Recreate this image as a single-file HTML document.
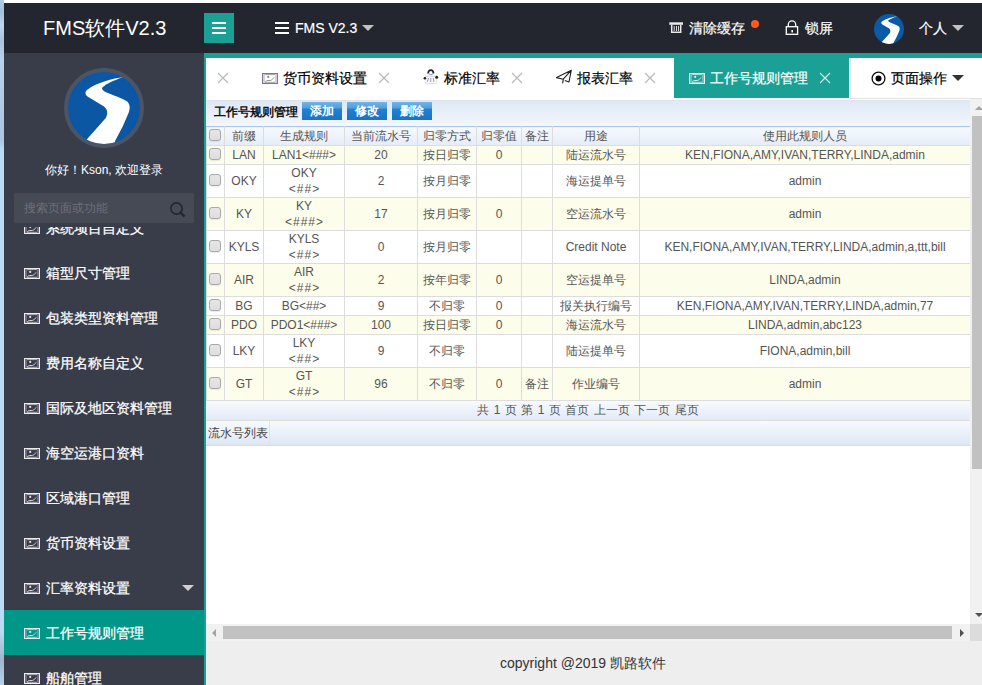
<!DOCTYPE html>
<html><head><meta charset="utf-8">
<style>
*{margin:0;padding:0;box-sizing:border-box;}
html,body{width:982px;height:685px;overflow:hidden;background:#fff;font-family:"Liberation Sans",sans-serif;position:relative;}
.abs{position:absolute;}
#lstrip{left:0;top:0;width:4px;height:685px;background:linear-gradient(#b0cae4 0,#a6c0da 12px,#bcd6f0 25px,#a9c3dd 40px,#b8d2ec 60px,#abc6e0 140px,#bcdaf6 150px,#bcdaf6 630px,#9fb6cc 660px,#b8d2ea 685px);}
#header{left:4px;top:3px;width:978px;height:50px;background:#23262e;color:#fff;}
#logo{left:39px;top:0;height:50px;line-height:50px;font-size:20px;color:#fff;white-space:nowrap;}
#hamb{left:200px;top:10px;width:30px;height:30px;background:#1aa094;}
#hamb i{position:absolute;left:8px;width:14px;height:2px;background:#fff;}
.hbar{position:absolute;width:14px;height:2px;background:#fff;}
.htxt{position:absolute;top:0;height:50px;line-height:50px;font-size:14px;color:#fff;white-space:nowrap;-webkit-text-stroke:0.2px #fff;}
.caret{position:absolute;width:0;height:0;border-left:6px solid transparent;border-right:6px solid transparent;border-top:6px solid #c2c2c2;}
#side{left:4px;top:53px;width:200px;height:632px;background:#393d49;overflow:hidden;}
#menu{left:0;top:174px;width:200px;height:458px;overflow:hidden;}
.mi{position:absolute;left:0;width:200px;height:45px;}
.mi .ic{position:absolute;left:20px;top:17.5px;}
.mi span{position:absolute;left:41.5px;top:1px;line-height:45px;font-size:14px;color:#fff;white-space:nowrap;-webkit-text-stroke:0.25px #fff;}
.mi.act{background:#009688;}
#content{left:204px;top:53px;width:778px;height:632px;background:#fff;border-top:5px solid #1aa094;border-left:2px solid #1aa094;}
#tabs{left:206px;top:58px;width:776px;height:40px;background:#fff;}
.tab{position:absolute;top:0;height:40px;line-height:40px;font-size:14px;color:#000;white-space:nowrap;}
.tt{top:58px;height:40px;line-height:40px;font-size:14px;color:#000;white-space:nowrap;-webkit-text-stroke:0.2px currentColor;}
#footer{left:206px;top:641px;width:776px;height:44px;background:#eeeeee;}
#foottxt{left:500px;top:641px;height:44px;line-height:44px;font-size:14px;color:#333;white-space:nowrap;}
/* frame */
#frame{left:206px;top:99px;width:764px;height:525px;background:#fff;overflow:hidden;}
#ptitle{left:0;top:1px;width:764px;height:26px;background:linear-gradient(#dee8f6,#f3f7fd);border-top:1px solid #dfe3ea;}
#ptitle b{position:absolute;left:8px;top:0;line-height:22px;font-size:12px;color:#111;}
.btn{position:absolute;top:1px;width:40px;height:18px;line-height:18px;text-align:center;font-size:12px;font-weight:bold;color:#fff;background:linear-gradient(#72b5e9 0,#4f9fdf 33%,#2181d2 40%,#1a72c3 100%);}
table{border-collapse:collapse;table-layout:fixed;font-size:12px;color:#555;}
td i{font-style:normal;letter-spacing:1px;position:relative;top:1px;left:0.5px;}
td{border:1px solid #dddddd;text-align:center;padding:0;overflow:hidden;white-space:nowrap;line-height:15px;}
tr.h td{background:linear-gradient(#f8f9fd,#e4ecf8);color:#555;height:19px;border-top-color:#a9c6ec;}
tr.y td{background:#fdfdeb;}
.cb{display:inline-block;width:12px;height:12px;border:1px solid #a9a9a9;border-radius:3px;background:linear-gradient(#e6e6e6,#dedede);vertical-align:middle;position:relative;left:-1px;top:-1px;box-shadow:0 1px 1px rgba(0,0,0,0.08);}
#pager{left:0;top:302px;width:764px;height:19px;background:linear-gradient(#f8fafd,#e3ebf7);font-size:12px;word-spacing:1.1px;color:#555;text-align:center;line-height:18px;}
#bar2{left:0;top:321px;width:764px;height:26px;background:linear-gradient(#f8fafd,#dce7f6);border-top:1px solid #dcdcdc;border-bottom:1px solid #dcdcdc;}
#vsb{left:970px;top:99px;width:17px;height:525px;background:#f1f1f1;}
#hsb{left:206px;top:624px;width:764px;height:17px;background:#f1f1f1;}
.tri{position:absolute;width:0;height:0;}
</style></head>
<body>
<div id="lstrip" class="abs"></div>
<div id="header" class="abs">
  <div id="logo" class="abs">FMS软件V2.3</div>
  <div id="hamb" class="abs"><i style="top:9px"></i><i style="top:14px"></i><i style="top:19px"></i></div>
  <div class="hbar" style="left:271px;top:19px"></div>
  <div class="hbar" style="left:271px;top:24px"></div>
  <div class="hbar" style="left:271px;top:29px"></div>
  <div class="htxt" style="left:291px">FMS V2.3</div>
  <div class="caret" style="left:358px;top:22px"></div>
  <svg class="abs" style="left:664px;top:17px" width="16" height="14" viewBox="0 0 16 14">
    <rect x="1.3" y="2.3" width="13.7" height="2.5" fill="#e8e8e8"/>
    <path d="M3.7 4.8 V12.3 H12.7 V4.8" fill="none" stroke="#e8e8e8" stroke-width="1.5"/>
    <path d="M6.2 6 V11 M8.5 6 V11 M10.5 6 V11" stroke="#d8d8d8" stroke-width="1"/>
  </svg>
  <div class="htxt" style="left:685px">清除缓存</div>
  <div class="abs" style="left:747px;top:17px;width:8px;height:8px;border-radius:50%;background:#ff5722"></div>
  <svg class="abs" style="left:781px;top:17px" width="14" height="15" viewBox="0 0 14 15">
    <path d="M4.3 9 V6.5 A3.7 3.7 0 0 1 11.7 6.5 V9" transform="translate(-1,-2)" fill="none" stroke="#fff" stroke-width="1.3"/>
    <rect x="2.3" y="7.2" width="11.3" height="7.6" fill="none" stroke="#fff" stroke-width="1.3" transform="translate(-1,-0.5)"/>
    <rect x="6.4" y="10" width="1.6" height="2.4" fill="#fff"/>
  </svg>
  <div class="htxt" style="left:801px">锁屏</div>
  <svg class="abs" style="left:870px;top:11px" width="30" height="30" viewBox="0 0 100 100">
    <defs><clipPath id="c2"><circle cx="50" cy="50" r="50"/></clipPath></defs>
    <circle cx="50" cy="50" r="50" fill="#0b5aa6"/>
    <path clip-path="url(#c2)" d="M77.8 7.1 C62 9 40 15 27.3 24.3 C22 28 24 33 29.3 35.5 L49.5 47.7 C56 52 55 59 52.5 63.9 L26.3 93.3 L18 110 L62 110 L65.7 95.3 L75.8 76 L83.8 57.8 C87 50 86 44 81.8 40.6 C76 37 60 31 53.5 28.4 C47 25.6 45 22 50.5 19.3 C56 15 68 10 77.8 7.1 Z" fill="#fff"/>
  </svg>
  <div class="htxt" style="left:915px">个人</div>
  <div class="caret" style="left:948px;top:22px"></div>
</div>
<div id="side" class="abs">
  
  <svg class="abs" style="left:60px;top:15px" width="80" height="80" viewBox="0 0 80 80">
    <defs><clipPath id="c1"><circle cx="40" cy="40" r="36"/></clipPath></defs>
    <circle cx="40" cy="40" r="38" fill="#0b57a3" stroke="#4b5566" stroke-width="4"/>
    <g clip-path="url(#c1)"><g transform="translate(4,4) scale(0.72)">
    <path d="M77.8 7.1 C62 9 40 15 27.3 24.3 C22 28 24 33 29.3 35.5 L49.5 47.7 C56 52 55 59 52.5 63.9 L26.3 93.3 L18 110 L62 110 L65.7 95.3 L75.8 76 L83.8 57.8 C87 50 86 44 81.8 40.6 C76 37 60 31 53.5 28.4 C47 25.6 45 22 50.5 19.3 C56 15 68 10 77.8 7.1 Z" fill="#fff"/>
    </g></g>
  </svg>
  <div class="abs" style="left:0;top:108px;width:200px;text-align:center;font-size:12px;line-height:18px;color:#fff;white-space:nowrap">你好！Kson, 欢迎登录</div>
  <div class="abs" style="left:10px;top:140px;width:180px;height:30px;background:#464a55;border-radius:2px"></div>
  <div class="abs" style="left:20px;top:140px;line-height:30px;font-size:12px;color:#6d7079;white-space:nowrap">搜索页面或功能</div>
  <svg class="abs" style="left:165px;top:148px" width="18" height="18" viewBox="0 0 18 18"><circle cx="7.5" cy="7.5" r="5.6" fill="none" stroke="#23262e" stroke-width="1.6"/><path d="M11.6 11.6 L15.5 15.5" stroke="#23262e" stroke-width="2.2"/></svg>
<div id="menu" class="abs">
<div class="mi" style="top:-22px"><svg class="ic" width="16" height="11" viewBox="0 0 16 11"><rect x="0.5" y="0.5" width="15" height="10" fill="none" stroke="#ececec" stroke-width="1"/><path d="M2 1V10M14 1V10" stroke="#b9a6d8" stroke-width="0.9"/><path d="M3 1.6H13M3 9.3H13" stroke="#dcdcdc" stroke-width="0.8"/><circle cx="6.2" cy="3.9" r="1.1" fill="#e0e0e0"/><path d="M3.4 8.6 C5 7 6.5 7.8 8.6 7.4 C10 7 11 5.5 12.4 4.4" fill="none" stroke="#e0e0e0" stroke-width="1"/></svg><span>系统项目自定义</span></div>
<div class="mi" style="top:23px"><svg class="ic" width="16" height="11" viewBox="0 0 16 11"><rect x="0.5" y="0.5" width="15" height="10" fill="none" stroke="#ececec" stroke-width="1"/><path d="M2 1V10M14 1V10" stroke="#b9a6d8" stroke-width="0.9"/><path d="M3 1.6H13M3 9.3H13" stroke="#dcdcdc" stroke-width="0.8"/><circle cx="6.2" cy="3.9" r="1.1" fill="#e0e0e0"/><path d="M3.4 8.6 C5 7 6.5 7.8 8.6 7.4 C10 7 11 5.5 12.4 4.4" fill="none" stroke="#e0e0e0" stroke-width="1"/></svg><span>箱型尺寸管理</span></div>
<div class="mi" style="top:68px"><svg class="ic" width="16" height="11" viewBox="0 0 16 11"><rect x="0.5" y="0.5" width="15" height="10" fill="none" stroke="#ececec" stroke-width="1"/><path d="M2 1V10M14 1V10" stroke="#b9a6d8" stroke-width="0.9"/><path d="M3 1.6H13M3 9.3H13" stroke="#dcdcdc" stroke-width="0.8"/><circle cx="6.2" cy="3.9" r="1.1" fill="#e0e0e0"/><path d="M3.4 8.6 C5 7 6.5 7.8 8.6 7.4 C10 7 11 5.5 12.4 4.4" fill="none" stroke="#e0e0e0" stroke-width="1"/></svg><span>包装类型资料管理</span></div>
<div class="mi" style="top:113px"><svg class="ic" width="16" height="11" viewBox="0 0 16 11"><rect x="0.5" y="0.5" width="15" height="10" fill="none" stroke="#ececec" stroke-width="1"/><path d="M2 1V10M14 1V10" stroke="#b9a6d8" stroke-width="0.9"/><path d="M3 1.6H13M3 9.3H13" stroke="#dcdcdc" stroke-width="0.8"/><circle cx="6.2" cy="3.9" r="1.1" fill="#e0e0e0"/><path d="M3.4 8.6 C5 7 6.5 7.8 8.6 7.4 C10 7 11 5.5 12.4 4.4" fill="none" stroke="#e0e0e0" stroke-width="1"/></svg><span>费用名称自定义</span></div>
<div class="mi" style="top:158px"><svg class="ic" width="16" height="11" viewBox="0 0 16 11"><rect x="0.5" y="0.5" width="15" height="10" fill="none" stroke="#ececec" stroke-width="1"/><path d="M2 1V10M14 1V10" stroke="#b9a6d8" stroke-width="0.9"/><path d="M3 1.6H13M3 9.3H13" stroke="#dcdcdc" stroke-width="0.8"/><circle cx="6.2" cy="3.9" r="1.1" fill="#e0e0e0"/><path d="M3.4 8.6 C5 7 6.5 7.8 8.6 7.4 C10 7 11 5.5 12.4 4.4" fill="none" stroke="#e0e0e0" stroke-width="1"/></svg><span>国际及地区资料管理</span></div>
<div class="mi" style="top:203px"><svg class="ic" width="16" height="11" viewBox="0 0 16 11"><rect x="0.5" y="0.5" width="15" height="10" fill="none" stroke="#ececec" stroke-width="1"/><path d="M2 1V10M14 1V10" stroke="#b9a6d8" stroke-width="0.9"/><path d="M3 1.6H13M3 9.3H13" stroke="#dcdcdc" stroke-width="0.8"/><circle cx="6.2" cy="3.9" r="1.1" fill="#e0e0e0"/><path d="M3.4 8.6 C5 7 6.5 7.8 8.6 7.4 C10 7 11 5.5 12.4 4.4" fill="none" stroke="#e0e0e0" stroke-width="1"/></svg><span>海空运港口资料</span></div>
<div class="mi" style="top:248px"><svg class="ic" width="16" height="11" viewBox="0 0 16 11"><rect x="0.5" y="0.5" width="15" height="10" fill="none" stroke="#ececec" stroke-width="1"/><path d="M2 1V10M14 1V10" stroke="#b9a6d8" stroke-width="0.9"/><path d="M3 1.6H13M3 9.3H13" stroke="#dcdcdc" stroke-width="0.8"/><circle cx="6.2" cy="3.9" r="1.1" fill="#e0e0e0"/><path d="M3.4 8.6 C5 7 6.5 7.8 8.6 7.4 C10 7 11 5.5 12.4 4.4" fill="none" stroke="#e0e0e0" stroke-width="1"/></svg><span>区域港口管理</span></div>
<div class="mi" style="top:293px"><svg class="ic" width="16" height="11" viewBox="0 0 16 11"><rect x="0.5" y="0.5" width="15" height="10" fill="none" stroke="#ececec" stroke-width="1"/><path d="M2 1V10M14 1V10" stroke="#b9a6d8" stroke-width="0.9"/><path d="M3 1.6H13M3 9.3H13" stroke="#dcdcdc" stroke-width="0.8"/><circle cx="6.2" cy="3.9" r="1.1" fill="#e0e0e0"/><path d="M3.4 8.6 C5 7 6.5 7.8 8.6 7.4 C10 7 11 5.5 12.4 4.4" fill="none" stroke="#e0e0e0" stroke-width="1"/></svg><span>货币资料设置</span></div>
<div class="mi" style="top:338px"><svg class="ic" width="16" height="11" viewBox="0 0 16 11"><rect x="0.5" y="0.5" width="15" height="10" fill="none" stroke="#ececec" stroke-width="1"/><path d="M2 1V10M14 1V10" stroke="#b9a6d8" stroke-width="0.9"/><path d="M3 1.6H13M3 9.3H13" stroke="#dcdcdc" stroke-width="0.8"/><circle cx="6.2" cy="3.9" r="1.1" fill="#e0e0e0"/><path d="M3.4 8.6 C5 7 6.5 7.8 8.6 7.4 C10 7 11 5.5 12.4 4.4" fill="none" stroke="#e0e0e0" stroke-width="1"/></svg><span>汇率资料设置</span><div class="caret" style="left:178px;top:20px;border-top-color:#d0d0d0"></div></div>
<div class="mi act" style="top:383px"><svg class="ic" width="16" height="11" viewBox="0 0 16 11"><rect x="0.5" y="0.5" width="15" height="10" fill="none" stroke="#ececec" stroke-width="1"/><path d="M2 1V10M14 1V10" stroke="#b9a6d8" stroke-width="0.9"/><path d="M3 1.6H13M3 9.3H13" stroke="#dcdcdc" stroke-width="0.8"/><circle cx="6.2" cy="3.9" r="1.1" fill="#e0e0e0"/><path d="M3.4 8.6 C5 7 6.5 7.8 8.6 7.4 C10 7 11 5.5 12.4 4.4" fill="none" stroke="#e0e0e0" stroke-width="1"/></svg><span>工作号规则管理</span></div>
<div class="mi" style="top:428px"><svg class="ic" width="16" height="11" viewBox="0 0 16 11"><rect x="0.5" y="0.5" width="15" height="10" fill="none" stroke="#ececec" stroke-width="1"/><path d="M2 1V10M14 1V10" stroke="#b9a6d8" stroke-width="0.9"/><path d="M3 1.6H13M3 9.3H13" stroke="#dcdcdc" stroke-width="0.8"/><circle cx="6.2" cy="3.9" r="1.1" fill="#e0e0e0"/><path d="M3.4 8.6 C5 7 6.5 7.8 8.6 7.4 C10 7 11 5.5 12.4 4.4" fill="none" stroke="#e0e0e0" stroke-width="1"/></svg><span>船舶管理</span></div>
</div>
</div>
<div id="content" class="abs"></div>
<div id="tabs" class="abs"></div>
<svg class="abs" style="left:217px;top:72px" width="12" height="12" viewBox="0 0 12 12"><path d="M1 1L11 11M11 1L1 11" stroke="#b8b8b8" stroke-width="1.2"/></svg><svg class="abs" style="left:262px;top:73px" width="16" height="11" viewBox="0 0 16 11"><rect x="0.5" y="0.5" width="15" height="10" fill="none" stroke="#7a7a7a" stroke-width="1"/><path d="M2 1V10M14 1V10" stroke="#b08ac8" stroke-width="0.9"/><path d="M3 1.6H13M3 9.3H13" stroke="#8a8a8a" stroke-width="0.8"/><circle cx="6.2" cy="3.9" r="1.1" fill="#8a8a8a"/><path d="M3.4 8.6 C5 7 6.5 7.8 8.6 7.4 C10 7 11 5.5 12.4 4.4" fill="none" stroke="#8a8a8a" stroke-width="1"/></svg><div class="abs tt" style="left:283px">货币资料设置</div><svg class="abs" style="left:378px;top:72px" width="12" height="12" viewBox="0 0 12 12"><path d="M1 1L11 11M11 1L1 11" stroke="#b8b8b8" stroke-width="1.2"/></svg><svg class="abs" style="left:422px;top:68px" width="18" height="18" viewBox="0 0 18 18">
<path d="M6.3 5.5 A2.6 2.6 0 1 1 11.3 5.5" fill="none" stroke="#222" stroke-width="1.8"/>
<path d="M6.6 5.8 Q8.8 7.6 11 5.8" fill="none" stroke="#8a8aa8" stroke-width="1"/>
<path d="M3.2 8.2 H14.8" stroke="#cfcfcf" stroke-width="1"/>
<path d="M3.6 8.5 V15.5 H14.4 V8.5" fill="none" stroke="#e0e0e0" stroke-width="1"/>
<path d="M5.5 14 L6.4 10 M8.8 14 V10 M12 14 L11.2 10" stroke="#9a8fb0" stroke-width="1"/>
<circle cx="2.9" cy="10.2" r="1.3" fill="#222"/><circle cx="14.7" cy="9.3" r="1.5" fill="#222"/></svg><div class="abs tt" style="left:444px">标准汇率</div><svg class="abs" style="left:511px;top:72px" width="12" height="12" viewBox="0 0 12 12"><path d="M1 1L11 11M11 1L1 11" stroke="#b8b8b8" stroke-width="1.2"/></svg><svg class="abs" style="left:552px;top:66px" width="24" height="22" viewBox="0 0 24 22">
<path d="M19.3 4.2 L4.5 11.6 L11.3 13.2 L10.6 17.4 M11.3 13.2 L19.3 4.2 L17 16 L12.8 14.4" fill="none" stroke="#222" stroke-width="1.1" stroke-linejoin="round"/></svg><div class="abs tt" style="left:577px">报表汇率</div><svg class="abs" style="left:644px;top:72px" width="12" height="12" viewBox="0 0 12 12"><path d="M1 1L11 11M11 1L1 11" stroke="#b8b8b8" stroke-width="1.2"/></svg><div class="abs" style="left:674px;top:58px;width:175px;height:40px;background:#1aa094"></div><svg class="abs" style="left:689px;top:73px" width="16" height="11" viewBox="0 0 16 11"><rect x="0.5" y="0.5" width="15" height="10" fill="none" stroke="#f4f4f4" stroke-width="1"/><path d="M2 1V10M14 1V10" stroke="#d6e6f2" stroke-width="0.9"/><path d="M3 1.6H13M3 9.3H13" stroke="#e8f0f0" stroke-width="0.8"/><circle cx="6.2" cy="3.9" r="1.1" fill="#e8f0f0"/><path d="M3.4 8.6 C5 7 6.5 7.8 8.6 7.4 C10 7 11 5.5 12.4 4.4" fill="none" stroke="#e8f0f0" stroke-width="1"/></svg><div class="abs tt" style="left:710px;color:#fff">工作号规则管理</div><svg class="abs" style="left:819px;top:72px" width="12" height="12" viewBox="0 0 12 12"><path d="M1 1L11 11M11 1L1 11" stroke="#d0ece9" stroke-width="1.1"/></svg><div class="abs" style="left:850px;top:58px;width:132px;height:41px;background:#fff;border-left:1px solid #e2e2e2;border-bottom:1px solid #e2e2e2"></div><svg class="abs" style="left:871px;top:71px" width="15" height="15" viewBox="0 0 15 15"><circle cx="7.5" cy="7.5" r="6.4" fill="none" stroke="#111" stroke-width="1.3"/><circle cx="7.5" cy="7.5" r="3" fill="#000"/></svg><div class="abs tt" style="left:891px">页面操作</div><div class="caret" style="left:952px;top:75px;border-top-color:#333"></div>
<div id="frame" class="abs">
  <div id="ptitle" class="abs"><b>工作号规则管理</b>
    <div class="btn" style="left:96px">添加</div>
    <div class="btn" style="left:141px">修改</div>
    <div class="btn" style="left:186px">删除</div>
  </div>
<table id="grid" class="abs" style="left:0;top:27px;width:764px"><colgroup><col style="width:18px"><col style="width:39px"><col style="width:81px"><col style="width:73px"><col style="width:59px"><col style="width:45px"><col style="width:31px"><col style="width:87px"><col style="width:331px"></colgroup><tr class="h" style="height:19px"><td><span class="cb"></span></td><td>前缀</td><td>生成规则</td><td>当前流水号</td><td>归零方式</td><td>归零值</td><td>备注</td><td>用途</td><td>使用此规则人员</td></tr><tr class="y" style="height:19px"><td><span class="cb"></span></td><td>LAN</td><td>LAN1&lt;###&gt;</td><td>20</td><td>按日归零</td><td>0</td><td></td><td>陆运流水号</td><td>KEN,FIONA,AMY,IVAN,TERRY,LINDA,admin</td></tr><tr style="height:33px"><td><span class="cb"></span></td><td>OKY</td><td>OKY<br><i>&lt;##&gt;</i></td><td>2</td><td>按月归零</td><td></td><td></td><td>海运提单号</td><td>admin</td></tr><tr class="y" style="height:33px"><td><span class="cb"></span></td><td>KY</td><td>KY<br><i>&lt;###&gt;</i></td><td>17</td><td>按月归零</td><td>0</td><td></td><td>空运流水号</td><td>admin</td></tr><tr style="height:33px"><td><span class="cb"></span></td><td>KYLS</td><td>KYLS<br><i>&lt;##&gt;</i></td><td>0</td><td>按月归零</td><td></td><td></td><td>Credit Note</td><td>KEN,FIONA,AMY,IVAN,TERRY,LINDA,admin,a,ttt,bill</td></tr><tr class="y" style="height:33px"><td><span class="cb"></span></td><td>AIR</td><td>AIR<br><i>&lt;##&gt;</i></td><td>2</td><td>按年归零</td><td>0</td><td></td><td>空运提单号</td><td>LINDA,admin</td></tr><tr style="height:19px"><td><span class="cb"></span></td><td>BG</td><td>BG&lt;##&gt;</td><td>9</td><td>不归零</td><td>0</td><td></td><td>报关执行编号</td><td>KEN,FIONA,AMY,IVAN,TERRY,LINDA,admin,77</td></tr><tr class="y" style="height:19px"><td><span class="cb"></span></td><td>PDO</td><td>PDO1&lt;###&gt;</td><td>100</td><td>按日归零</td><td>0</td><td></td><td>海运流水号</td><td>LINDA,admin,abc123</td></tr><tr style="height:33px"><td><span class="cb"></span></td><td>LKY</td><td>LKY<br><i>&lt;##&gt;</i></td><td>9</td><td>不归零</td><td></td><td></td><td>陆运提单号</td><td>FIONA,admin,bill</td></tr><tr class="y" style="height:33px"><td><span class="cb"></span></td><td>GT</td><td>GT<br><i>&lt;##&gt;</i></td><td>96</td><td>不归零</td><td>0</td><td>备注</td><td>作业编号</td><td>admin</td></tr></table>
<div id="pager" class="abs">共 1 页 第 1 页 首页 上一页 下一页 尾页</div>
<div id="bar2" class="abs"><div class="abs" style="left:0;top:0;width:64px;height:24px;border-right:1px solid #dde4ee;line-height:24px;font-size:12px;color:#444;padding-left:2px;white-space:nowrap">流水号列表</div></div>
</div>
<div id="vsb" class="abs">
  <div class="tri" style="left:4.5px;top:6.5px;border-left:4px solid transparent;border-right:4px solid transparent;border-bottom:4px solid #a3a3a3"></div>
  <div class="abs" style="left:2px;top:17px;width:13px;height:353px;background:#c1c1c1"></div>
  <div class="tri" style="left:4.5px;top:514px;border-left:4px solid transparent;border-right:4px solid transparent;border-top:4px solid #505050"></div>
</div>
<div id="hsb" class="abs">
  <div class="tri" style="left:6px;top:4.5px;border-top:4px solid transparent;border-bottom:4px solid transparent;border-right:4px solid #a3a3a3"></div>
  <div class="abs" style="left:17px;top:2px;width:729px;height:13px;background:#c1c1c1"></div>
  <div class="tri" style="left:754px;top:4.5px;border-top:4px solid transparent;border-bottom:4px solid transparent;border-left:4px solid #505050"></div>
</div>
<div class="abs" style="left:970px;top:624px;width:17px;height:17px;background:#dcdcdc"></div>
<div id="footer" class="abs"></div>
<div id="foottxt" class="abs">copyright @2019 凯路软件</div>
</body></html>
